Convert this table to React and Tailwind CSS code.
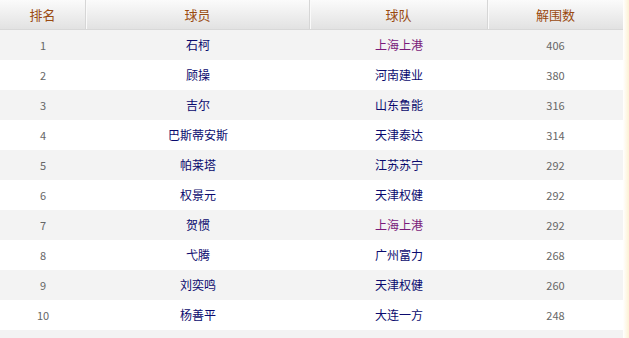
import React from 'react';

const rows = [
    { rank: 1, name: '石柯', team: '上海上港', count: 406, visited: true },
    { rank: 2, name: '顾操', team: '河南建业', count: 380 },
    { rank: 3, name: '吉尔', team: '山东鲁能', count: 316 },
    { rank: 4, name: '巴斯蒂安斯', team: '天津泰达', count: 314 },
    { rank: 5, name: '帕莱塔', team: '江苏苏宁', count: 292 },
    { rank: 6, name: '权景元', team: '天津权健', count: 292 },
    { rank: 7, name: '贺惯', team: '上海上港', count: 292, visited: true },
    { rank: 8, name: '弋腾', team: '广州富力', count: 268 },
    { rank: 9, name: '刘奕鸣', team: '天津权健', count: 260 },
    { rank: 10, name: '杨善平', team: '大连一方', count: 248 },
];

const cols = 'grid grid-cols-[86px_224px_178px_135px]';

const App = () => {
    return (
        <div className="flex w-[629px] h-[338px] overflow-hidden bg-white" style={{ fontFamily: '"Noto Sans CJK SC", "Noto Sans", sans-serif' }}>
            <div className="w-[623px]">
                {/* 表头 */}
                <div className={`${cols} h-[30px] bg-gradient-to-b from-[#fbfbfb] to-[#e2e2e2] border-b border-[#d8d8d8]`}>
                    {['排名', '球员', '球队', '解围数'].map((h, i) => (
                        <div
                            key={h}
                            className={`flex items-center justify-center text-[13px] text-[#9a4a10] ${i < 3 ? 'border-r border-[#d6d6d6] shadow-[1px_0_0_#fafafa]' : ''}`}
                        >
                            {h}
                        </div>
                    ))}
                </div>

                {rows.map((r) => (
                    <div key={r.rank} className={`${cols} h-[30px] ${r.rank % 2 ? 'bg-[#f3f3f3]' : 'bg-white'}`}>
                        <div className="flex items-center justify-center text-[11px] text-[#666]">{r.rank}</div>
                        <div className="flex items-center justify-center text-[12px] text-[#0a0a6e]">{r.name}</div>
                        <div className={`flex items-center justify-center text-[12px] ${r.visited ? 'text-[#7a1a7a]' : 'text-[#0a0a6e]'}`}>
                            {r.team}
                        </div>
                        <div className="flex items-center justify-center text-[11px] text-[#666]">{r.count}</div>
                    </div>
                ))}
                <div className="h-[30px] bg-[#f3f3f3]" />
            </div>
            <div className="w-[6px] bg-gradient-to-r from-white to-[#fdf1d4]" />
        </div>
    );
};

export default App;
